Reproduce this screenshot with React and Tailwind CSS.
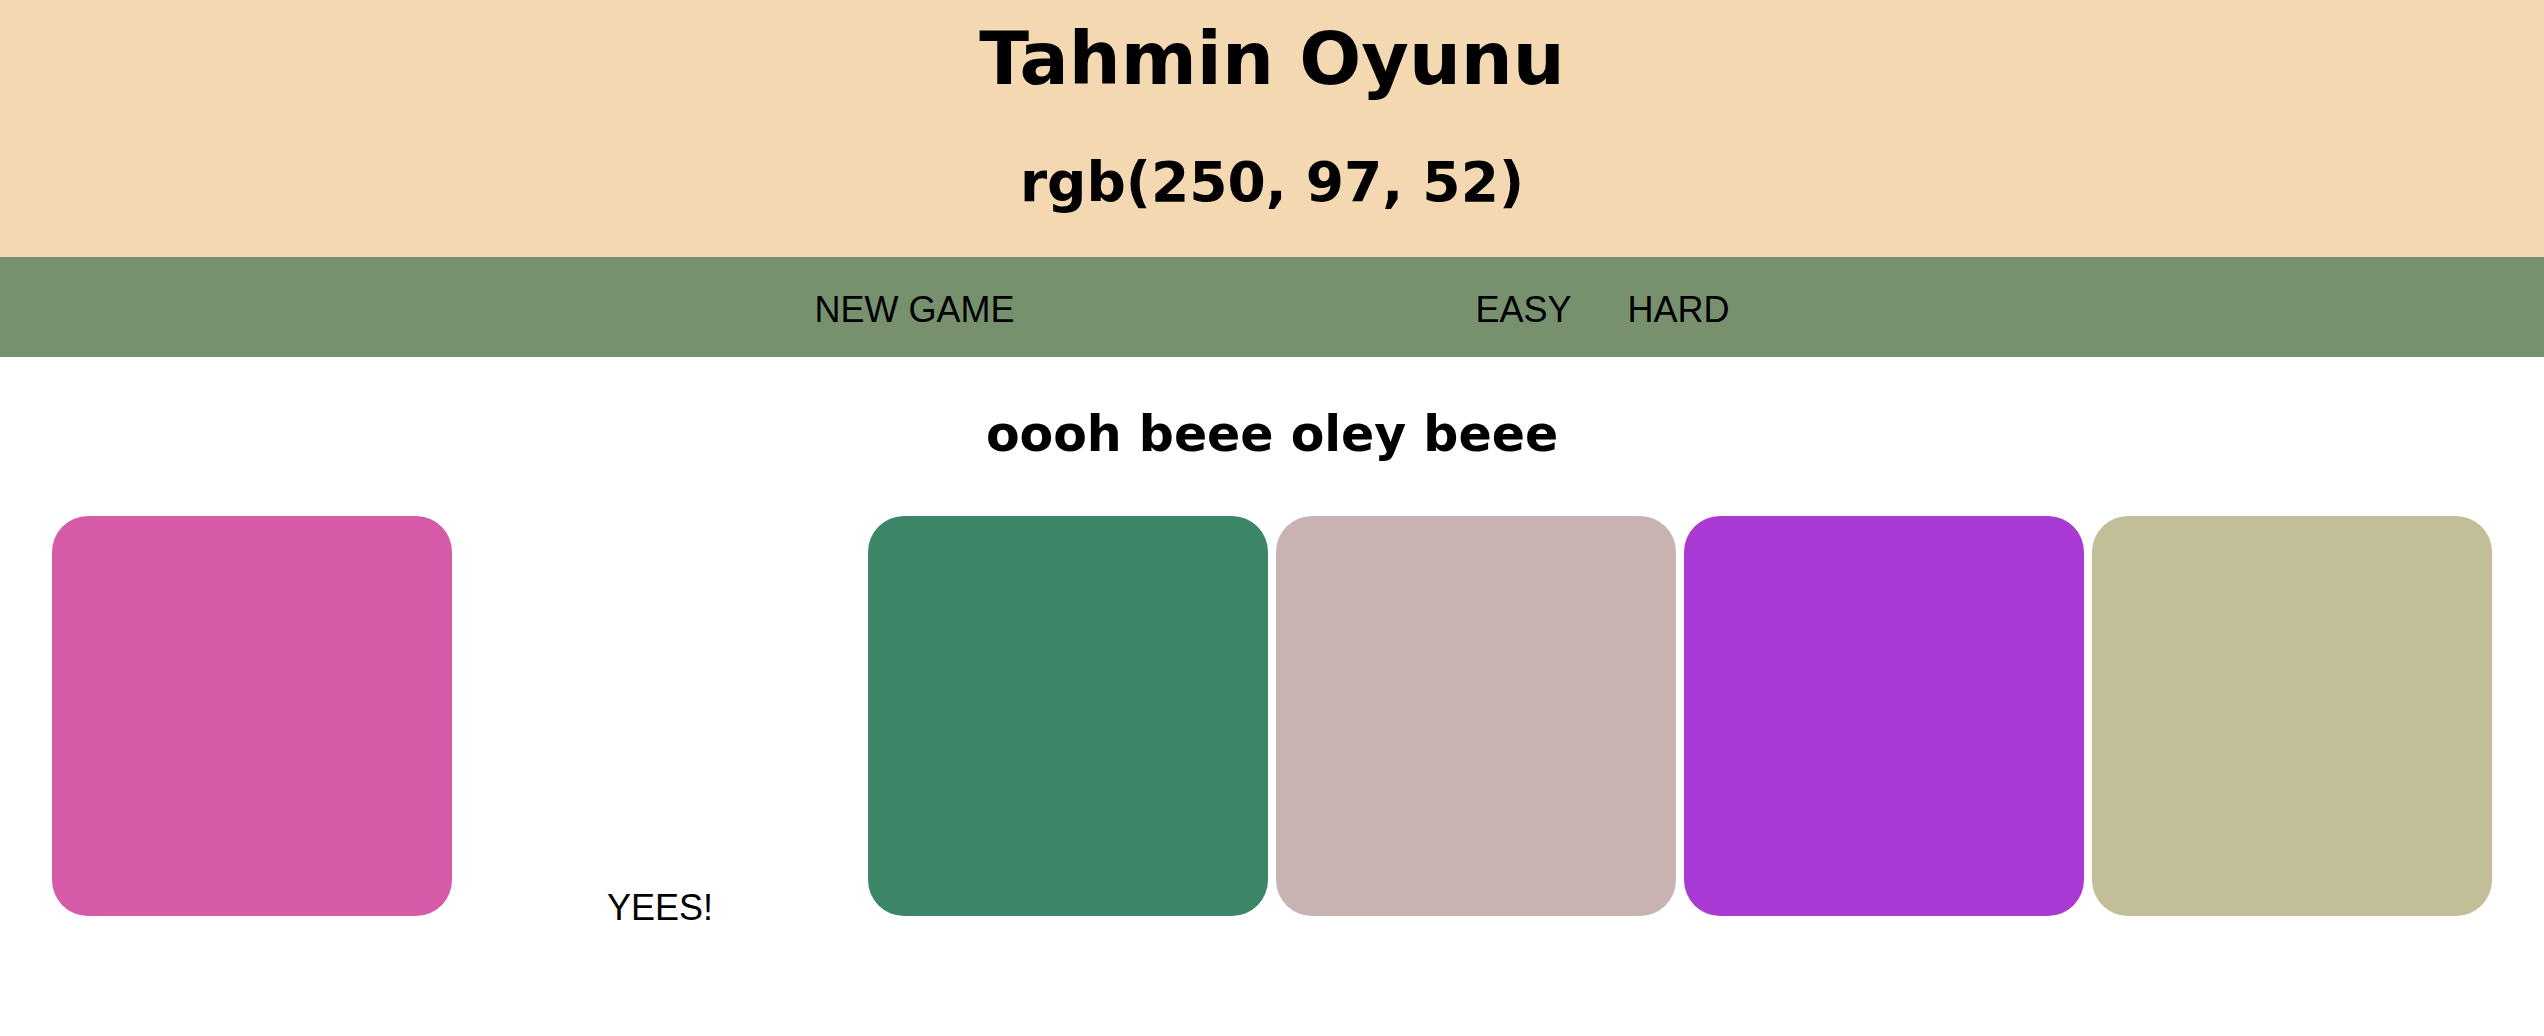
export default function App() {
  const squares = ["#d65aa8", null, "#3c8667", "#c8b3b2", "#a93ad3", "#c2be98"];

  return (
    <div className="min-h-screen bg-white text-black">
      {/* Header */}
      <header className="h-[257px] bg-[#f3d8b2] text-center font-['DejaVu_Sans',sans-serif] font-bold">
        <h1 className="pt-[17px] text-[73px] leading-[84px]">Tahmin Oyunu</h1>
        <h2 className="mt-[50px] text-[55px] leading-[63px]">rgb(250, 97, 52)</h2>
      </header>

      {/* Stripe */}
      <nav className="h-[100px] pt-[6px] bg-[#77916f] flex items-center justify-center font-['Liberation_Sans',Arial,sans-serif] text-[36px] leading-[42px]">
        <button className="px-[30px]">NEW GAME</button>
        <span className="w-[401px]" />
        <button className="pl-[30px] pr-[28px]">EASY</button>
        <button className="pl-[28px] pr-[30px]">HARD</button>
      </nav>

      {/* Message */}
      <p className="pt-[49px] text-center font-['DejaVu_Sans',sans-serif] font-bold text-[49px] leading-[57px]">
        oooh beee oley beee
      </p>

      {/* Squares */}
      <div className="mt-[49px] flex justify-center">
        {squares.map((c, i) =>
          c ? (
            <div
              key={i}
              className="w-[400px] h-[400px] m-[4px] rounded-[36px] shrink-0"
              style={{ backgroundColor: c }}
            />
          ) : (
            <div
              key={i}
              className="w-[400px] h-[400px] m-[4px] shrink-0 flex items-end justify-center"
            >
              <span className="mb-[-19px] font-['Liberation_Sans',Arial,sans-serif] text-[36px]">
                YEES!
              </span>
            </div>
          )
        )}
      </div>
    </div>
  );
}
